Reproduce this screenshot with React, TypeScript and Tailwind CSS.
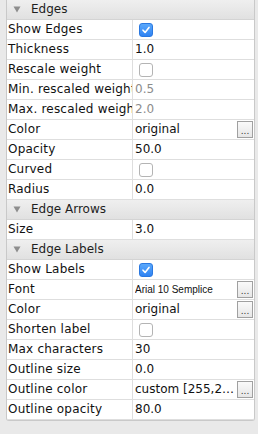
import React from "react";

type Row =
  | { kind: "header"; title: string }
  | { kind: "text"; label: string; value: string; muted?: boolean; small?: boolean; button?: boolean }
  | { kind: "check"; label: string; checked: boolean };

const rows: Row[] = [
  { kind: "header", title: "Edges" },
  { kind: "check", label: "Show Edges", checked: true },
  { kind: "text", label: "Thickness", value: "1.0" },
  { kind: "check", label: "Rescale weight", checked: false },
  { kind: "text", label: "Min. rescaled weight", value: "0.5", muted: true },
  { kind: "text", label: "Max. rescaled weight", value: "2.0", muted: true },
  { kind: "text", label: "Color", value: "original", button: true },
  { kind: "text", label: "Opacity", value: "50.0" },
  { kind: "check", label: "Curved", checked: false },
  { kind: "text", label: "Radius", value: "0.0" },
  { kind: "header", title: "Edge Arrows" },
  { kind: "text", label: "Size", value: "3.0" },
  { kind: "header", title: "Edge Labels" },
  { kind: "check", label: "Show Labels", checked: true },
  { kind: "text", label: "Font", value: "Arial 10 Semplice", small: true, button: true },
  { kind: "text", label: "Color", value: "original", button: true },
  { kind: "check", label: "Shorten label", checked: false },
  { kind: "text", label: "Max characters", value: "30" },
  { kind: "text", label: "Outline size", value: "0.0" },
  { kind: "text", label: "Outline color", value: "custom [255,255,255]", button: true },
  { kind: "text", label: "Outline opacity", value: "80.0" },
];

function Checkbox({ checked }: { checked: boolean }) {
  if (checked) {
    return (
      <div className="w-[14px] h-[14px] rounded-[3px] bg-gradient-to-b from-[#5aa8fb] to-[#2f83f3] border border-[#2a78e0] flex items-center justify-center">
        <svg width="10" height="10" viewBox="0 0 10 10">
          <path d="M2 5.2 L4.1 7.4 L8 2.4" stroke="white" strokeWidth="1.6" fill="none" strokeLinecap="round" strokeLinejoin="round" />
        </svg>
      </div>
    );
  }
  return <div className="w-[14px] h-[14px] rounded-[3px] bg-white border border-[#b4b4b4]" />;
}

function DotsButton() {
  return (
    <div className="w-[16px] h-[17px] shrink-0 border border-[#a0a0a0] bg-gradient-to-b from-[#fafafa] to-[#e6e6e6] flex items-end justify-center pb-[1px] text-[9px] leading-[9px] text-[#333]">
      ...
    </div>
  );
}

export default function App() {
  return (
    <div
      className="w-[258px] h-[434px] bg-[#e9e9e9] pl-[6px] pr-[3px] overflow-hidden"
      style={{ fontFamily: '"DejaVu Sans", sans-serif' }}
    >
      <div className="bg-white border-x border-b border-[#c9c9c9] rounded-b-[3px]">
        {rows.map((row, i) => {
          if (row.kind === "header") {
            return (
              <div
                key={i}
                className="h-[20px] flex items-center border-b border-[#d4d4d4] bg-gradient-to-b from-[#efefef] to-[#e1e1e1]"
              >
                <svg width="8" height="7" viewBox="0 0 8 7" className="ml-[6px] mr-[10px]">
                  <path d="M0.5 0.5 L7.5 0.5 L4 6.5 Z" fill="#8d8d8d" />
                </svg>
                <span className="text-[12px] text-[#1e1e1e] leading-[19px]">{row.title}</span>
              </div>
            );
          }
          return (
            <div key={i} className="h-[20px] flex border-b border-[#dedede]">
              <div className="w-[126px] shrink-0 border-r border-[#dedede] pl-[1px] overflow-hidden whitespace-nowrap text-[12px] leading-[19px] tracking-[0.2px] text-[#111]">
                {row.label}
              </div>
              <div className="flex-1 min-w-0 flex items-center pl-[2px] pr-[1px]">
                {row.kind === "check" ? (
                  <div className="ml-[4px]">
                    <Checkbox checked={row.checked} />
                  </div>
                ) : (
                  <>
                    <span
                      className={`flex-1 min-w-0 overflow-hidden whitespace-nowrap text-ellipsis leading-[19px] ${
                        row.small ? "text-[10px]" : "text-[12px]"
                      } ${row.muted ? "text-[#8c8c8c]" : "text-[#111]"}`}
                      style={row.small ? { fontFamily: '"Liberation Sans", sans-serif' } : undefined}
                    >
                      {row.value}
                    </span>
                    {row.button && <DotsButton />}
                  </>
                )}
              </div>
            </div>
          );
        })}
      </div>
    </div>
  );
}
